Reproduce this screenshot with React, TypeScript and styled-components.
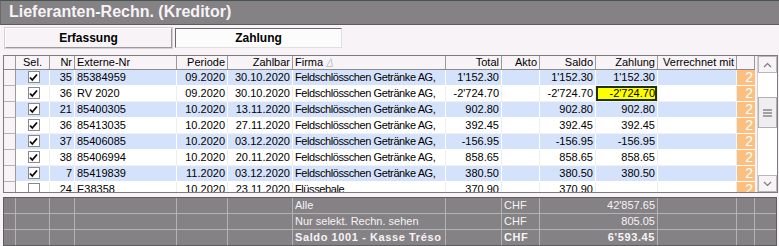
import React from "react";
import styled, { createGlobalStyle } from "styled-components";

const GlobalStyle = createGlobalStyle`
  html, body {
    margin: 0;
    padding: 0;
    background: #f7f3f7;
    overflow: hidden;
  }
  * { box-sizing: border-box; }
`;

const cols =
  "12px 34px 25px 102px 51px 65px 153px 56px 38px 56px 62px 79px 18px";
const footCols =
  "12px 34px 25px 102px 51px 65px 153px 56px 38px 118px 79px 18px 1fr";

const Page = styled.div`
  width: 779px;
  height: 246px;
  background: #f7f3f7;
  font-family: "Liberation Sans", Arial, sans-serif;
  font-size: 11px;
  color: #000;
`;

const TitleBar = styled.div`
  height: 25px;
  background: #848284;
  border-top: 1px solid #46554c;
  border-bottom: 1px solid #5c5c5c;
  border-left: 1px solid #6a6a6a;
  color: #f7f3f7;
  font-size: 16px;
  font-weight: bold;
  line-height: 22px;
  padding-left: 8px;
`;

const TabRow = styled.div`
  display: flex;
  gap: 3px;
  padding: 3px 0 0 5px;
  height: 29px;
`;

const Tab = styled.div<{ $active?: boolean }>`
  width: 167px;
  height: 20px;
  font-size: 12px;
  font-weight: bold;
  text-align: center;
  line-height: 18px;
  background: ${(p) => (p.$active ? "#fcfcfc" : "#f7f3f7")};
  border: 1px solid;
  border-color: ${(p) =>
    p.$active ? "#6a6a6a #e0e0e0 #e0e0e0 #6a6a6a" : "#ffffff #9a9a9a #9a9a9a #ffffff"};
  box-shadow: ${(p) => (p.$active ? "none" : "0 0 0 1px #d4d0d4")};
`;

const GridFrame = styled.div`
  margin: 1px 0 0 3px;
  width: 775px;
  height: 138px;
  border: 1px solid #7c7c7c;
  display: flex;
  gap: 2px;
  background: #f7f3f7;
`;

const TableArea = styled.div`
  width: 751px;
  display: flex;
  flex-direction: column;
`;

const HeadRow = styled.div`
  display: grid;
  grid-template-columns: ${cols};
  height: 14px;
  border-bottom: 1px solid #8a8a8a;
`;

const HeadCell = styled.div<{ $align?: string }>`
  border-right: 1px solid #9a9a9a;
  line-height: 13px;
  padding: 0 2px;
  white-space: nowrap;
  overflow: hidden;
  display: flex;
  align-items: center;
  justify-content: ${(p) =>
    p.$align === "right" ? "flex-end" : p.$align === "center" ? "center" : "flex-start"};
  gap: 3px;
`;

const Body = styled.div`
  height: 122px;
  overflow: hidden;
`;

const Row = styled.div<{ $alt?: boolean }>`
  display: grid;
  grid-template-columns: ${cols};
  height: 16px;
  background: ${(p) => (p.$alt ? "#d5e2fb" : "#ffffff")};
`;

const Cell = styled.div<{ $align?: string; $alt?: boolean; $tight?: boolean }>`
  border-right: 1px solid ${(p) => (p.$alt ? "#ffffff" : "#eeeeee")};
  border-bottom: 1px solid ${(p) => (p.$alt ? "#ffffff" : "#f2f2f2")};
  text-align: ${(p) => p.$align || "left"};
  letter-spacing: ${(p) => (p.$tight ? "-0.4px" : "0")};
  line-height: 15px;
  padding: 0 2px;
  white-space: nowrap;
  overflow: hidden;
`;

const Indicator = styled.div`
  background: #f7f3f7;
  border-right: 1px solid #9a9a9a;
  border-bottom: 1px solid #b4b4b4;
`;

const SelCell = styled(Cell)`
  display: flex;
  align-items: center;
  justify-content: center;
  padding: 0 0 1px 2px;
`;

const Box = styled.span`
  width: 12px;
  height: 12px;
  border: 1px solid #8a8a8a;
  background: #fff;
  display: flex;
  align-items: center;
  justify-content: center;
`;

const PayCell = styled(Cell)<{ $focus?: boolean }>`
  background: ${(p) => (p.$focus ? "#ffff00" : "transparent")};
  box-shadow: ${(p) => (p.$focus ? "inset 0 0 0 2px #1e3408" : "none")};
  line-height: ${(p) => (p.$focus ? "14px" : "15px")};
`;

const Flag = styled.div`
  background: #fdbf80;
  border-bottom: 1px solid #ffffff;
  color: #ffffff;
  font-size: 14px;
  line-height: 15px;
  text-align: right;
  padding-right: 2px;
`;

const ScrollBar = styled.div`
  width: 20px;
  display: flex;
  flex-direction: column;
  background: #ffffff;
  border-left: 1px solid #d0d0d0;
`;

const ScrollBtn = styled.div`
  height: 17px;
  background: #f7f3f7;
  border: 1px solid #b8b8b8;
  display: flex;
  align-items: center;
  justify-content: center;
`;

const Track = styled.div<{ $h: number }>`
  height: ${(p) => p.$h}px;
  background: #ffffff;
`;

const Thumb = styled.div`
  height: 31px;
  background: #f0eef0;
  border: 1px solid #b0b0b0;
  display: flex;
  align-items: center;
  justify-content: center;
`;

const Footer = styled.div`
  margin: 4px 0 0 3px;
  width: 774px;
  height: 49px;
  background: #848284;
  border: 1px solid #5e5e5e;
  color: #f7f3f7;
`;

const FootRow = styled.div<{ $bold?: boolean; $last?: boolean }>`
  display: grid;
  grid-template-columns: ${footCols};
  height: ${(p) => (p.$last ? 15 : 16)}px;
  font-weight: ${(p) => (p.$bold ? "bold" : "normal")};
  letter-spacing: ${(p) => (p.$bold ? "0.6px" : "0")};
  border-bottom: ${(p) => (p.$last ? "none" : "1px solid #b4b2b4")};
`;

const FootCell = styled.div<{ $align?: string }>`
  border-right: 1px solid #b4b2b4;
  text-align: ${(p) => p.$align || "left"};
  line-height: 15px;
  padding: 0 2px;
  white-space: nowrap;
  overflow: hidden;
  &:last-child { border-right: none; }
`;

type Inv = {
  sel: boolean;
  nr: string;
  ext: string;
  per: string;
  due: string;
  firm: string;
  total: string;
  saldo: string;
  pay: string;
};

const FIRM = "Feldschlösschen Getränke AG,";

const rows: Inv[] = [
  { sel: true, nr: "35", ext: "85384959", per: "09.2020", due: "30.10.2020", firm: FIRM, total: "1'152.30", saldo: "1'152.30", pay: "1'152.30" },
  { sel: true, nr: "36", ext: "RV 2020", per: "09.2020", due: "30.10.2020", firm: FIRM, total: "-2'724.70", saldo: "-2'724.70", pay: "-2'724.70" },
  { sel: true, nr: "21", ext: "85400305", per: "10.2020", due: "13.11.2020", firm: FIRM, total: "902.80", saldo: "902.80", pay: "902.80" },
  { sel: true, nr: "36", ext: "85413035", per: "10.2020", due: "27.11.2020", firm: FIRM, total: "392.45", saldo: "392.45", pay: "392.45" },
  { sel: true, nr: "37", ext: "85406085", per: "10.2020", due: "03.12.2020", firm: FIRM, total: "-156.95", saldo: "-156.95", pay: "-156.95" },
  { sel: true, nr: "38", ext: "85406994", per: "10.2020", due: "20.11.2020", firm: FIRM, total: "858.65", saldo: "858.65", pay: "858.65" },
  { sel: true, nr: "7", ext: "85419839", per: "11.2020", due: "03.12.2020", firm: FIRM, total: "380.50", saldo: "380.50", pay: "380.50" },
  { sel: false, nr: "24", ext: "E38358", per: "10.2020", due: "23.11.2020", firm: "Flüssebale", total: "370.90", saldo: "370.90", pay: "" },
];

function Check({ on }: { on: boolean }) {
  return (
    <Box>
      {on && (
        <svg width="9" height="9" viewBox="0 0 9 9">
          <polyline points="1,4.5 3.3,7 8,1.5" fill="none" stroke="#000" strokeWidth="1.7" />
        </svg>
      )}
    </Box>
  );
}

function Chevron({ down }: { down?: boolean }) {
  return (
    <svg width="9" height="6" viewBox="0 0 9 6">
      <polyline
        points={down ? "1,1 4.5,4.5 8,1" : "1,5 4.5,1.5 8,5"}
        fill="none"
        stroke="#7a7a7a"
        strokeWidth="1.2"
      />
    </svg>
  );
}

function SortMark() {
  return (
    <svg width="7" height="9" viewBox="0 0 7 9">
      <path d="M0.5 8.5 L5 0.8 M0.5 8.5 L6.5 8.5 L5 0.8" fill="none" stroke="#c4c4c4" strokeWidth="1" />
    </svg>
  );
}

export default function App() {
  return (
    <Page>
      <GlobalStyle />
      <TitleBar>Lieferanten-Rechn. (Kreditor)</TitleBar>
      <TabRow>
        <Tab>Erfassung</Tab>
        <Tab $active>Zahlung</Tab>
      </TabRow>
      <GridFrame>
        <TableArea>
          <HeadRow>
            <HeadCell />
            <HeadCell $align="center">Sel.</HeadCell>
            <HeadCell $align="right">Nr</HeadCell>
            <HeadCell>Externe-Nr</HeadCell>
            <HeadCell $align="right">Periode</HeadCell>
            <HeadCell $align="right">Zahlbar</HeadCell>
            <HeadCell>
              Firma <SortMark />
            </HeadCell>
            <HeadCell $align="right">Total</HeadCell>
            <HeadCell $align="right">Akto</HeadCell>
            <HeadCell $align="right">Saldo</HeadCell>
            <HeadCell $align="right">Zahlung</HeadCell>
            <HeadCell $align="right">Verrechnet mit</HeadCell>
            <HeadCell />
          </HeadRow>
          <Body>
            {rows.map((r, i) => {
              const alt = i % 2 === 0 && i < 7;
              return (
                <Row key={i} $alt={alt}>
                  <Indicator />
                  <SelCell $alt={alt}>
                    <Check on={r.sel} />
                  </SelCell>
                  <Cell $alt={alt} $align="right">{r.nr}</Cell>
                  <Cell $alt={alt}>{r.ext}</Cell>
                  <Cell $alt={alt} $align="right">{r.per}</Cell>
                  <Cell $alt={alt} $align="right">{r.due}</Cell>
                  <Cell $alt={alt} $tight>{r.firm}</Cell>
                  <Cell $alt={alt} $align="right">{r.total}</Cell>
                  <Cell $alt={alt} />
                  <Cell $alt={alt} $align="right">{r.saldo}</Cell>
                  <PayCell $alt={alt} $align="right" $focus={i === 1}>
                    {r.pay}
                  </PayCell>
                  <Cell $alt={alt} />
                  <Flag>2</Flag>
                </Row>
              );
            })}
          </Body>
        </TableArea>
        <ScrollBar>
          <ScrollBtn>
            <Chevron />
          </ScrollBtn>
          <Track $h={24} />
          <Thumb>
            <svg width="9" height="8" viewBox="0 0 9 8">
              <path d="M0 1 H9 M0 4 H9 M0 7 H9" stroke="#555" strokeWidth="1.2" />
            </svg>
          </Thumb>
          <Track $h={47} />
          <ScrollBtn>
            <Chevron down />
          </ScrollBtn>
        </ScrollBar>
      </GridFrame>
      <Footer>
        {[
          { label: "Alle", value: "42'857.65" },
          { label: "Nur selekt. Rechn. sehen", value: "805.05" },
          { label: "Saldo 1001 - Kasse Tréso", value: "6'593.45", bold: true },
        ].map((f, i) => (
          <FootRow key={i} $bold={f.bold} $last={i === 2}>
            <FootCell />
            <FootCell />
            <FootCell />
            <FootCell />
            <FootCell />
            <FootCell />
            <FootCell>{f.label}</FootCell>
            <FootCell />
            <FootCell>CHF</FootCell>
            <FootCell $align="right">{f.value}</FootCell>
            <FootCell />
            <FootCell />
            <FootCell />
          </FootRow>
        ))}
      </Footer>
    </Page>
  );
}
